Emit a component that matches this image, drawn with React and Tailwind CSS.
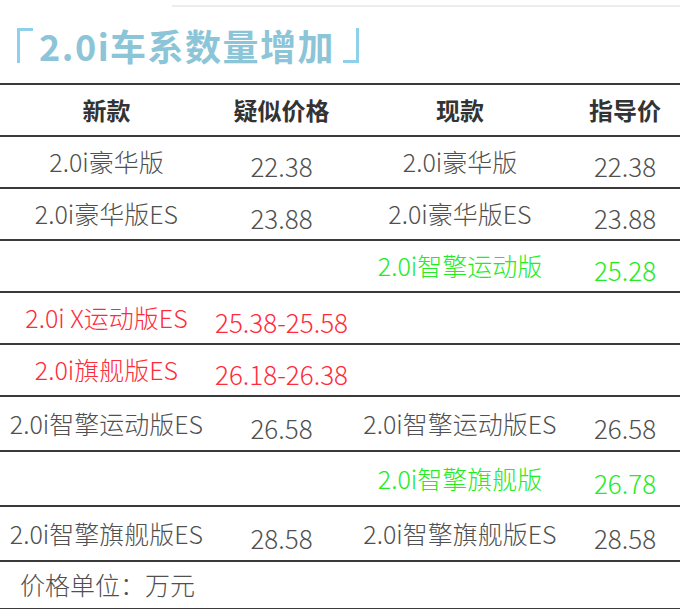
const rows = [
  { a: "2.0i豪华版", b: "22.38", c: "2.0i豪华版", d: "22.38" },
  { a: "2.0i豪华版ES", b: "23.88", c: "2.0i豪华版ES", d: "23.88" },
  { c: "2.0i智擎运动版", d: "25.28", tone: "green" },
  { a: "2.0i X运动版ES", b: "25.38-25.58", tone: "red" },
  { a: "2.0i旗舰版ES", b: "26.18-26.38", tone: "red" },
  { a: "2.0i智擎运动版ES", b: "26.58", c: "2.0i智擎运动版ES", d: "26.58", tall: true },
  { c: "2.0i智擎旗舰版", d: "26.78", tone: "green", tall: true },
  { a: "2.0i智擎旗舰版ES", b: "28.58", c: "2.0i智擎旗舰版ES", d: "28.58", tall: true },
];

const toneClass = {
  red: "text-[#ff2b3b]",
  green: "text-[#22ec22]",
};

const Row = ({ row }) => {
  const color = toneClass[row.tone] || "text-[#505050]";
  return (
    <div
      className={`grid grid-cols-[213px_137px_220px_110px] border-b-2 border-[#3a3a3a] ${
        row.tall ? "h-[55px]" : "h-[52px]"
      } ${color}`}
    >
      <div className="flex items-center justify-center">{row.a}</div>
      <div className="flex items-center justify-center pt-[7px] text-[26px]">{row.b}</div>
      <div className="flex items-center justify-center">{row.c}</div>
      <div className="flex items-center justify-center pt-[7px] text-[26px]">{row.d}</div>
    </div>
  );
};

export default function App() {
  return (
    <div className="w-[680px] h-[609px] bg-white overflow-hidden font-['Noto_Sans_CJK_SC','Noto_Sans',sans-serif]">
      <div className="h-[7px] pt-[5px]">
        <div className="ml-[172px] border-t-2 border-[#ececec]" />
      </div>

      {/* title with corner brackets */}
      <div className="h-[76px] flex items-center pl-[17px]">
        <span className="w-[16px] h-[35px] border-l-[3px] border-t-[3px] border-[#8fd0ea]" />
        <span className="ml-[6px] text-[#8cc5d7] text-[36px] font-bold leading-none tracking-[1.5px]">
          2.0i车系数量增加
        </span>
        <span className="ml-[8px] w-[16px] h-[35px] border-r-[3px] border-b-[3px] border-[#8fd0ea]" />
      </div>

      <div className="border-t-2 border-[#3a3a3a]">
        <div className="grid grid-cols-[213px_137px_220px_110px] h-[52px] border-b-2 border-[#3a3a3a] text-[#333] text-[24px] font-bold">
          <div className="flex items-center justify-center">新款</div>
          <div className="flex items-center justify-center">疑似价格</div>
          <div className="flex items-center justify-center">现款</div>
          <div className="flex items-center justify-center">指导价</div>
        </div>

        <div className="text-[25px] font-light">
          {rows.map((row, i) => (
            <Row key={i} row={row} />
          ))}
          <div className="h-[48px] border-b-2 border-[#3a3a3a] flex items-center pl-[20px] text-[#505050]">
            价格单位：万元
          </div>
        </div>
      </div>
    </div>
  );
}
